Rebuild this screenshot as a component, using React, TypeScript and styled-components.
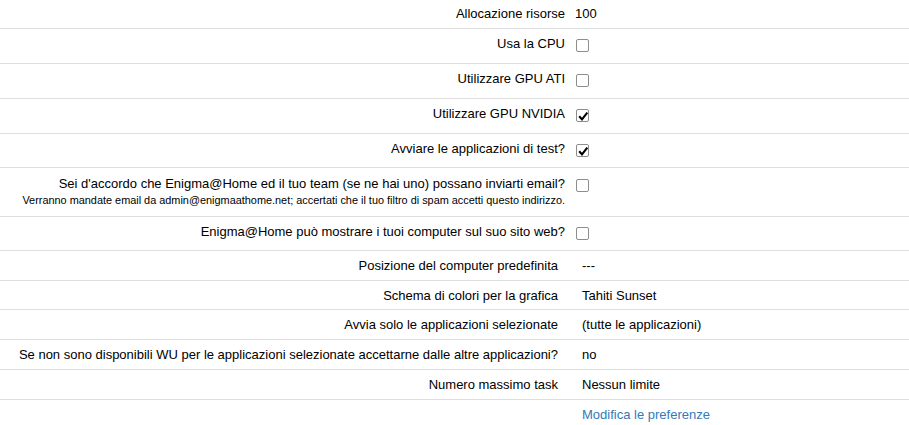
import React from "react";
import styled, { createGlobalStyle } from "styled-components";

const GlobalStyle = createGlobalStyle`
  body {
    margin: 0;
    background: #fff;
    color: #000;
    font-family: "Liberation Sans", Arial, sans-serif;
    font-size: 13px;
  }
`;

const Page = styled.div`
  width: 909px;
`;

const Table = styled.div`
  display: flex;
  flex-direction: column;
`;

const Row = styled.div<{ $h: number; $cols: string; $pt: number; $open?: boolean }>`
  display: grid;
  grid-template-columns: ${(p) => p.$cols};
  box-sizing: border-box;
  height: ${(p) => p.$h}px;
  padding-top: ${(p) => p.$pt}px;
  border-bottom: ${(p) => (p.$open ? "none" : "1px solid #ddd")};
  line-height: 15px;
`;

const Label = styled.div`
  text-align: right;
  white-space: nowrap;
`;

const Note = styled.div`
  font-size: 10.9px;
  line-height: 15px;
  margin-top: 2px;
`;

const Value = styled.div<{ $pad: number }>`
  padding-left: ${(p) => p.$pad}px;
  white-space: nowrap;
`;

const Box = styled.span`
  display: block;
  box-sizing: border-box;
  width: 13px;
  height: 13px;
  margin-top: 3px;
  margin-left: 1px;
  border: 1px solid #8d8d8d;
  border-radius: 2px;
  background: #fff;
  position: relative;

  svg {
    position: absolute;
    left: 0;
    top: 0;
  }
`;

const Link = styled.a`
  color: #337ab7;
  text-decoration: none;
`;

const Check = ({ on }: { on?: boolean }) => (
  <Box>
    {on && (
      <svg width="13" height="13" viewBox="0 0 13 13">
        <path d="M2.2 6.2 L5 9.4 L10.3 2.6" fill="none" stroke="#000" strokeWidth="2.1" />
      </svg>
    )}
  </Box>
);

type Item = {
  label: string;
  value?: React.ReactNode;
  h: number;
  pt?: number;
  note?: string;
  open?: boolean;
};

const first: Item[] = [
  { label: "Allocazione risorse", value: "100", h: 29, pt: 6 },
  { label: "Usa la CPU", value: <Check />, h: 35 },
  { label: "Utilizzare GPU ATI", value: <Check />, h: 35 },
  { label: "Utilizzare GPU NVIDIA", value: <Check on />, h: 35 },
  { label: "Avviare le applicazioni di test?", value: <Check on />, h: 34 },
  {
    label: "Sei d'accordo che Enigma@Home ed il tuo team (se ne hai uno) possano inviarti email?",
    note: "Verranno mandate email da admin@enigmaathome.net; accertati che il tuo filtro di spam accetti questo indirizzo.",
    value: <Check />,
    h: 49,
    pt: 8,
  },
  { label: "Enigma@Home può mostrare i tuoi computer sul suo sito web?", value: <Check />, h: 34 },
];

const second: Item[] = [
  { label: "Posizione del computer predefinita", value: "---", h: 30 },
  { label: "Schema di colori per la grafica", value: "Tahiti Sunset", h: 29 },
  { label: "Avvia solo le applicazioni selezionate", value: "(tutte le applicazioni)", h: 30 },
  {
    label: "Se non sono disponibili WU per le applicazioni selezionate accettarne dalle altre applicazioni?",
    value: "no",
    h: 30,
  },
  { label: "Numero massimo task", value: "Nessun limite", h: 30 },
  { label: "", value: <Link href="#">Modifica le preferenze</Link>, h: 25, open: true },
];

const Section = ({ items, cols, pad, pt }: { items: Item[]; cols: string; pad: number; pt: number }) => (
  <Table>
    {items.map((it, i) => (
      <Row key={i} $h={it.h} $cols={cols} $pt={it.pt ?? pt} $open={it.open}>
        <Label>
          {it.label}
          {it.note && <Note>{it.note}</Note>}
        </Label>
        <Value $pad={pad}>{it.value}</Value>
      </Row>
    ))}
  </Table>
);

export default function App() {
  return (
    <>
      <GlobalStyle />
      <Page>
        <Section items={first} cols="565px 1fr" pad={10} pt={7} />
        <Section items={second} cols="558px 1fr" pad={24} pt={7} />
      </Page>
    </>
  );
}
